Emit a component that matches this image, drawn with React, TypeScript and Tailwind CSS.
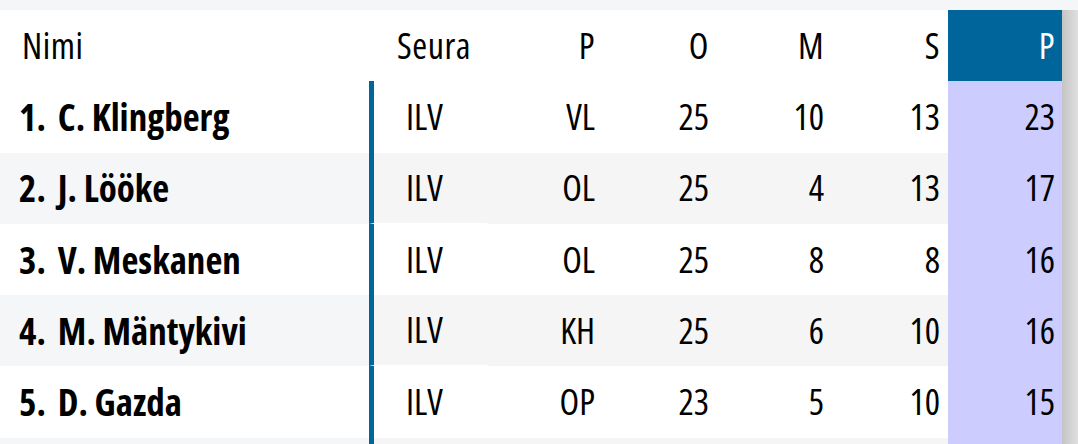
import React from 'react';

interface Player {
  rank: number;
  name: string;
  club: string;
  pos: string;
  games: number;
  goals: number;
  assists: number;
  points: number;
}

const players: Player[] = [
  { rank: 1, name: 'C. Klingberg', club: 'ILV', pos: 'VL', games: 25, goals: 10, assists: 13, points: 23 },
  { rank: 2, name: 'J. Lööke', club: 'ILV', pos: 'OL', games: 25, goals: 4, assists: 13, points: 17 },
  { rank: 3, name: 'V. Meskanen', club: 'ILV', pos: 'OL', games: 25, goals: 8, assists: 8, points: 16 },
  { rank: 4, name: 'M. Mäntykivi', club: 'ILV', pos: 'KH', games: 25, goals: 6, assists: 10, points: 16 },
  { rank: 5, name: 'D. Gazda', club: 'ILV', pos: 'OP', games: 23, goals: 5, assists: 10, points: 15 },
];

const cols = 'grid grid-cols-[369px_118px_115px_115px_115px_116px_114px_16px] h-[71.3px] items-center';
const scroll = 'h-full bg-linear-to-r from-[#c4c4c4] to-[#e0e0e0]';

function StatsTable() {
  return (
    <div className="font-['Open_Sans',sans-serif] [font-stretch:condensed] text-[36px] text-black">
      {/* header */}
      <div className={`${cols} bg-white tracking-[0.5px]`}>
        <div className="pl-[22px]">Nimi</div>
        <div className="pl-[28px]">Seura</div>
        <div className="text-right pr-[7px]">P</div>
        <div className="text-right pr-[8px]">O</div>
        <div className="text-right pr-[8px]">M</div>
        <div className="text-right pr-[8px]">S</div>
        <div className="h-full flex items-center justify-end pr-[7px] bg-[#00659b] text-white">P</div>
        <div className={scroll} />
      </div>

      {players.map((p, i) => {
        const gray = i % 2 === 1;
        return (
          <div key={p.rank} className={`${cols} ${gray ? 'bg-[#f5f5f5]' : 'bg-white'}`}>
            <div
              className={`h-full flex items-center pl-[19px] font-bold text-[37px] ${
                gray ? 'bg-[#f4f6f8]' : 'bg-white'
              }`}
            >
              <span>{p.rank}.</span>
              <span className="ml-[12px]">{p.name}</span>
            </div>
            <div
              className={`h-full flex items-center pl-[32px] border-l-[5px] border-l-[#00659b] ${
                gray ? 'border-b border-b-white' : ''
              }`}
            >
              {p.club}
            </div>
            <div className="text-right pr-[7px]">{p.pos}</div>
            <div className="text-right pr-[8px]">{p.games}</div>
            <div className="text-right pr-[8px]">{p.goals}</div>
            <div className="text-right pr-[8px]">{p.assists}</div>
            <div className="h-full flex items-center justify-end pr-[7px] bg-[#ccccff]">{p.points}</div>
            <div className={scroll} />
          </div>
        );
      })}

      {/* next row, cut off by the window */}
      <div className={`${cols} bg-[#f5f5f5]`}>
        <div className="h-full bg-[#f4f6f8]" />
        <div className="h-full border-l-[5px] border-l-[#00659b]" />
        <div />
        <div />
        <div />
        <div />
        <div className="h-full bg-[#ccccff]" />
        <div className={scroll} />
      </div>
    </div>
  );
}

export default function App() {
  return (
    <div className="w-[1078px] h-[444px] overflow-hidden bg-[#f5f6f8] pt-[10px]">
      <StatsTable />
    </div>
  );
}
